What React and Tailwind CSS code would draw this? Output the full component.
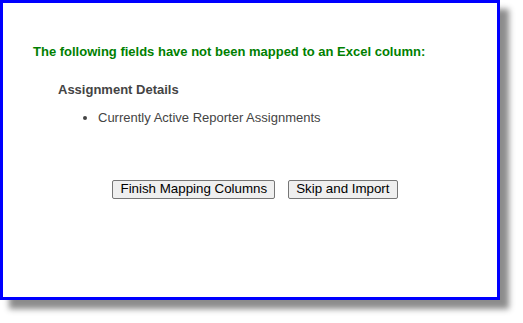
import React from 'react';

const App = () => {
    return (
        <div className="w-[523px] h-[323px] bg-white" style={{ fontFamily: '"Liberation Sans", Arial, sans-serif' }}>
            <div className="w-[500px] h-[300px] border-[3px] border-[#0000ff] bg-white shadow-[9px_9px_6px_rgba(0,0,0,0.45)] flex flex-col">
                <div className="pt-[39px] pl-[30px] text-[13px] font-bold text-[#008000]">
                    The following fields have not been mapped to an Excel column:
                </div>
                <div className="pt-[18px] pl-[55px] text-[13px] font-bold text-[#444]">
                    Assignment Details
                </div>
                <ul className="mt-[9px] pl-[95px] list-disc text-[13px] text-[#444]">
                    <li>Currently Active Reporter Assignments</li>
                </ul>
                <div className="mt-[52px] flex justify-center gap-[13px] pl-[10px]">
                    <button className="h-[19px] px-[7px] text-[13.33px] leading-none text-black bg-[#efefef] border border-[#767676] rounded-[2px]">
                        Finish Mapping Columns
                    </button>
                    <button className="h-[19px] px-[7px] text-[13.33px] leading-none text-black bg-[#efefef] border border-[#767676] rounded-[2px]">
                        Skip and Import
                    </button>
                </div>
            </div>
        </div>
    );
};

export default App;
